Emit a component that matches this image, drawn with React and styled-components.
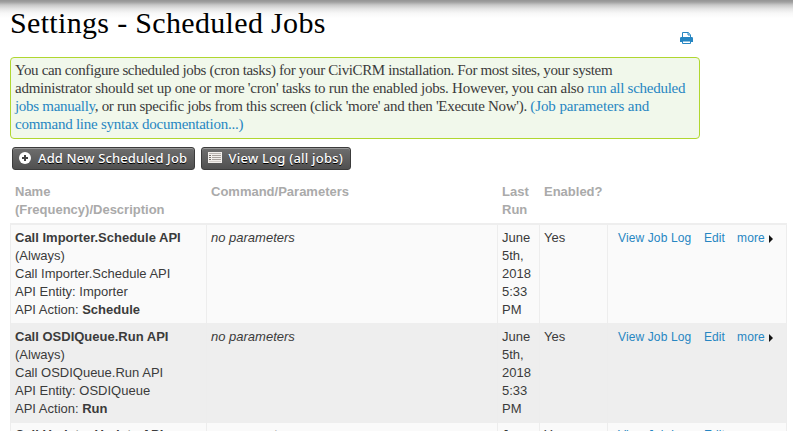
import React from 'react';
import styled, { createGlobalStyle } from 'styled-components';

const GlobalStyle = createGlobalStyle`
  * { box-sizing: border-box; }
  html, body { margin: 0; background: #fff; overflow: hidden; }
`;

const Page = styled.main`
  height: 431px;
  overflow: hidden;
  color: #3b3b3b;
  font: 13px/18px "Liberation Sans", Arial, sans-serif;
  background: linear-gradient(#949494 0, #a0a0a0 2px, #c8c8c8 5px, #e6e6e6 9px, #f7f7f7 13px, #fff 18px) 0 0 / 100% 18px no-repeat;
`;

const Header = styled.header`
  display: flex;
  justify-content: space-between;
  width: 693px;
  height: 57px;
  padding-left: 10px;
`;

const Title = styled.h1`
  margin: 5px 0 0;
  color: #000;
  font: 400 30px/36px "Liberation Serif", Georgia, serif;
  letter-spacing: 0.33px;
  white-space: nowrap;
`;

const PrintLink = styled.a`
  display: block;
  width: 13px;
  height: 12px;
  margin-top: 32px;
  svg { display: block; }
`;

const HelpBox = styled.section`
  width: 690px;
  height: 82px;
  margin-left: 10px;
  padding: 3px 4px 0;
  border: 1px solid #b0d730;
  border-radius: 4px;
  background: #f1f8eb;
  font: 15px/18px "Liberation Serif", Georgia, serif;
`;

const HelpLine = styled.div`
  white-space: pre;
  letter-spacing: ${(p) => p.$track}px;
`;

const Link = styled.a`
  color: #2786c2;
  text-decoration: none;
  white-space: nowrap;
  letter-spacing: ${(p) => (p.$track === undefined ? 'inherit' : `${p.$track}px`)};
`;

const ButtonBar = styled.div`
  display: flex;
  gap: 6px;
  padding: 8px 0 0 12px;
`;

const Button = styled.a`
  display: flex;
  align-items: center;
  width: ${(p) => p.$width}px;
  height: 23px;
  padding: 0 0 2px ${(p) => p.$pad}px;
  gap: 7px;
  border: 1px solid #3c3c3c;
  border-radius: 3px;
  background: linear-gradient(#6e6e6e, #505050);
  box-shadow: inset 0 1px 0 #999;
  color: #fff;
  font: 500 13px/18px "Noto Sans", "Open Sans", sans-serif;
  letter-spacing: ${(p) => p.$track}px;
  text-shadow: 0 1px 0 #000;
  white-space: nowrap;
  svg { flex: none; }
`;

const Grid = styled.div`
  display: grid;
  grid-template-columns: 196px 291px 42px 68px 180px;
  width: 777px;
`;

const HeadRow = styled(Grid)`
  height: 55px;
  margin-left: 10px;
  padding-top: 13px;
  border-bottom: 2px solid #eee;
  color: #aaa;
  font-weight: 700;
`;

const HeadCell = styled.div`
  padding: 0 10px 0 5px;
  &:nth-child(4) { padding-right: 0; }
`;

const Row = styled(Grid)`
  height: ${(p) => p.$height}px;
  background: ${(p) => (p.$even ? '#eee' : '#fafafa')};
  border-right: 1px solid #ededed;
`;

const Cell = styled.div`
  padding: ${(p) => p.$top}px 0 0 4px;
  border-left: 1px solid #ededed;
  white-space: ${(p) => (p.$wrap ? 'normal' : 'nowrap')};
`;

const Actions = styled(Cell)`
  display: flex;
  align-items: flex-start;
  padding-left: 10px;
  font-size: 12px;
  letter-spacing: 0.12px;
`;

const Action = styled(Link)`
  margin-right: ${(p) => p.$gap}px;
`;

const Arrow = styled.i`
  margin-top: 6px;
  border: solid transparent;
  border-width: 4px 0 4px 4px;
  border-left-color: #111;
`;

const TableBody = styled.div`
  margin-left: 10px;
`;

function PrintIcon() {
  return (
    <svg width="13" height="12" viewBox="0 0 13 12">
      <path d="M2.5 6V.5h5.7l2.3 2.3V6M8 .5V3h2.5" fill="none" stroke="#2786c2" />
      <path d="M1.2 5h10.6Q13 5 13 6.2V10H0V6.2Q0 5 1.2 5z" fill="#2786c2" />
      <path d="M2.5 9h8v2.5h-8z" fill="#fff" stroke="#2786c2" />
    </svg>
  );
}

function AddIcon() {
  return (
    <svg width="12" height="12" viewBox="0 0 12 12">
      <circle cx="6" cy="6" r="6" fill="#fff" />
      <path d="M6 3v6M3 6h6" stroke="#444" strokeWidth="2" />
    </svg>
  );
}

function LogIcon() {
  return (
    <svg width="14" height="11" viewBox="0 0 14 11" shapeRendering="crispEdges">
      <path d="M0 0h14v11H0z" fill="#f2efec" />
      <path d="M1 1h12v1H1z" fill="#b9b4b0" />
      <path d="M1 3.5h2M1 5.5h2M1 7.5h2" stroke="#77716c" />
      <path d="M4 3.5h9M4 5.5h9M4 7.5h9" stroke="#a7a19c" />
      <path d="M1 9.5h12" stroke="#d2cdc9" />
    </svg>
  );
}

const jobs = [
  { name: 'Importer', action: 'Schedule', height: 98, top: 4 },
  { name: 'OSDIQueue', action: 'Run', height: 100, top: 5 },
  { name: 'Updater', action: 'Update', height: 98, top: 3 },
];

function JobRow({ job, even }) {
  return (
    <Row $even={even} $height={job.height}>
      <Cell $top={job.top}>
        <b>Call {job.name}.{job.action} API</b><br />
        (Always)<br />
        Call {job.name}.{job.action} API<br />
        API Entity: {job.name}<br />
        API Action: <b>{job.action}</b>
      </Cell>
      <Cell $top={job.top}><em>no parameters</em></Cell>
      <Cell $top={job.top} $wrap>June 5th, 2018 5:33 PM</Cell>
      <Cell $top={job.top}>Yes</Cell>
      <Actions $top={job.top}>
        <Action $gap={12.6}>View Job Log</Action>
        <Action $gap={12}>Edit</Action>
        <Action $gap={4}>more</Action>
        <Arrow />
      </Actions>
    </Row>
  );
}

export default function App() {
  return (
    <>
      <GlobalStyle />
      <Page>
        <Header>
          <Title>Settings - Scheduled Jobs</Title>
          <PrintLink><PrintIcon /></PrintLink>
        </Header>
        <HelpBox>
          <HelpLine $track={-0.36}>You can configure scheduled jobs (cron tasks) for your CiviCRM installation. For most sites, your system</HelpLine>
          <HelpLine $track={-0.25}>administrator should set up one or more 'cron' tasks to run the enabled jobs. However, you can also <Link $track={-0.26}>run all scheduled</Link></HelpLine>
          <HelpLine $track={-0.297}><Link>jobs manually</Link>, or run specific jobs from this screen (click 'more' and then 'Execute Now'). <Link $track={-0.1}>(Job parameters and</Link></HelpLine>
          <HelpLine $track={-0.25}><Link>command line syntax documentation...)</Link></HelpLine>
        </HelpBox>
        <ButtonBar>
          <Button $width={183} $pad={6} $track={0.12}><AddIcon />Add New Scheduled Job</Button>
          <Button $width={150} $pad={5.5} $track={0.2}><LogIcon />View Log (all jobs)</Button>
        </ButtonBar>
        <HeadRow>
          <HeadCell>Name (Frequency)/Description</HeadCell>
          <HeadCell>Command/Parameters</HeadCell>
          <HeadCell>Last Run</HeadCell>
          <HeadCell>Enabled?</HeadCell>
        </HeadRow>
        <TableBody>
          {jobs.map((job, i) => <JobRow key={job.name} job={job} even={i % 2 === 1} />)}
        </TableBody>
      </Page>
    </>
  );
}
